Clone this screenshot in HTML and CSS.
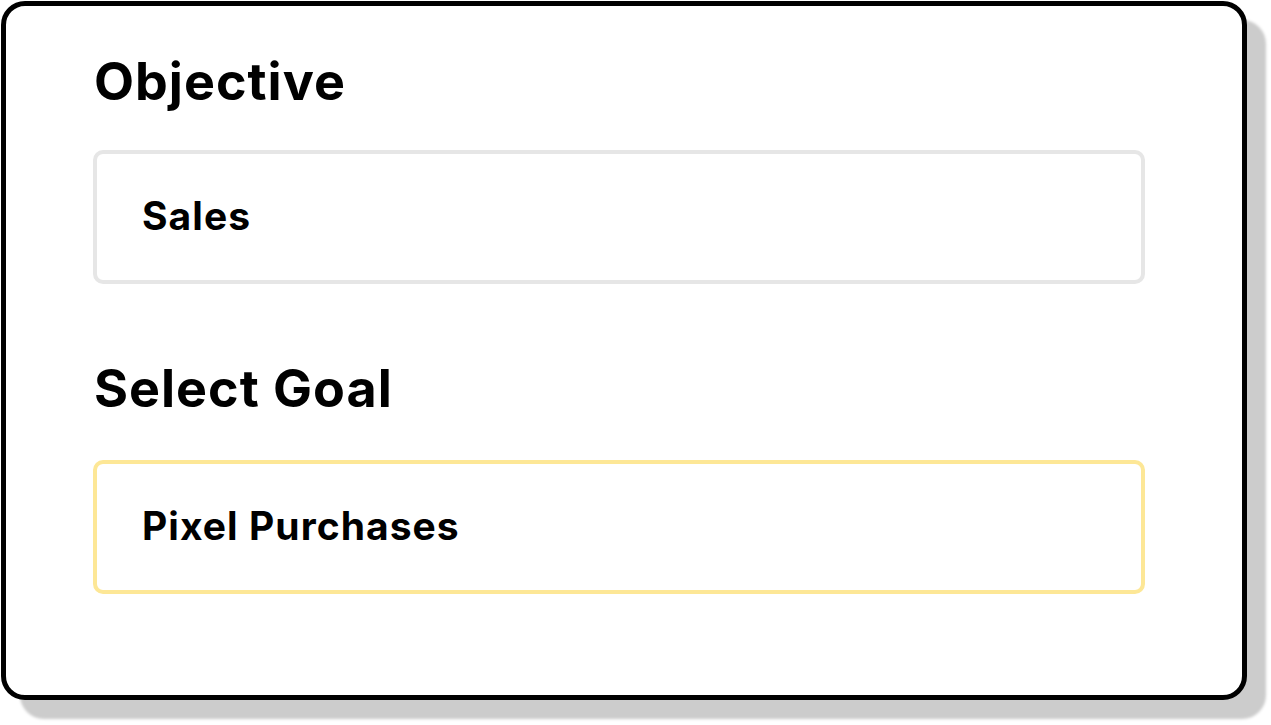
FILE: index.html
```html
<!DOCTYPE html>
<html lang="en">
<head>
<meta charset="utf-8">
<title>Objective</title>
<link rel="stylesheet" href="styles.css">
</head>
<body>
  <div class="card">
    <h2 class="section-title">Objective</h2>
    <div class="field field-default">Sales</div>
    <h2 class="section-title section-title-second">Select Goal</h2>
    <div class="field field-active">Pixel Purchases</div>
  </div>
</body>
</html>
```

FILE: styles.css
```css
html, body {
  margin: 0;
  padding: 0;
  background: #ffffff;
}

body {
  width: 1271px;
  height: 725px;
  overflow: hidden;
  font-family: "Inter", "Liberation Sans", sans-serif;
  color: #000000;
}

.card {
  box-sizing: border-box;
  margin: 1px 0 0 1px;
  width: 1246px;
  height: 699px;
  border: 5px solid #000000;
  border-radius: 24px;
  background: #ffffff;
  box-shadow: 19px 19px 3px #cccccc;
  padding: 46px 97px 0 87px;
  display: flex;
  flex-direction: column;
}

.section-title {
  margin: 0 0 0 1px;
  font-size: 52px;
  line-height: 60px;
  font-weight: 700;
  letter-spacing: 1px;
}

.section-title-second {
  margin-top: 75px;
}

.field {
  box-sizing: border-box;
  height: 134px;
  margin-top: 38px;
  border: 4px solid #e6e6e6;
  border-radius: 10px;
  padding: 0 0 3px 45px;
  display: flex;
  align-items: center;
  font-size: 39px;
  font-weight: 700;
  letter-spacing: 1.05px;
}

.field-active {
  margin-top: 41px;
  border-color: #fde796;
}
```
